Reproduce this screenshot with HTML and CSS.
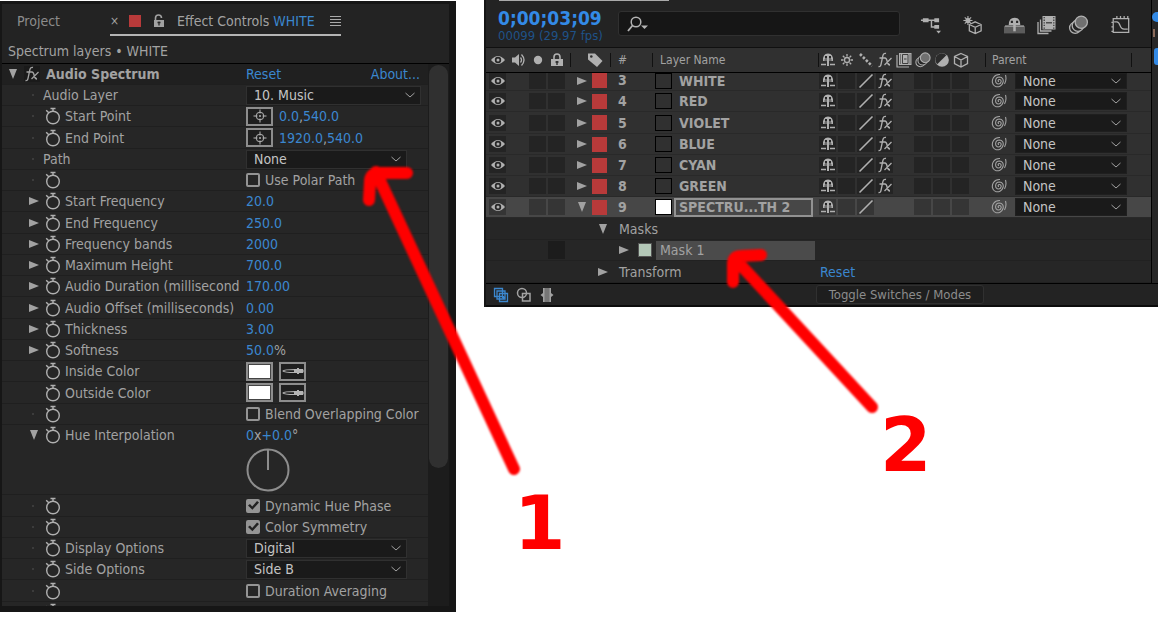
FILE: index.html
```html
<!DOCTYPE html>
<html lang="en">
<head>
<meta charset="utf-8">
<title>Effect Controls</title>
<link rel="stylesheet" href="styles.css">
</head>
<body>
<svg class="sprite" aria-hidden="true">
  <symbol id="watch" viewBox="0 0 20 20"><g fill="none" stroke="currentColor" stroke-width="1.400"><circle cx="10" cy="11.500" r="6.300"/><path d="M7.500 2.500h5M10 2.500V5M3.200 4.200l2.600 2.600"/></g></symbol>
  <symbol id="right" viewBox="0 0 10 10"><path d="M0 1l10 4-10 4z" fill="currentColor"/></symbol>
  <symbol id="down" viewBox="0 0 10 10"><path d="M1 0l4 10 4-10z" fill="currentColor"/></symbol>
  <symbol id="chev" viewBox="0 0 12 8"><path d="M1.500 2l4.500 4 4.500-4" fill="none" stroke="currentColor" stroke-width="1"/></symbol>
  <symbol id="target" viewBox="0 0 16 16"><g fill="none" stroke="currentColor" stroke-width="1"><circle cx="8" cy="8" r="3.800"/><path d="M8 1.500v4M8 10.500v4M1.500 8h4M10.500 8h4M8 7v2M7 8h2"/></g></symbol>
  <symbol id="dropper" viewBox="0 0 24 14"><path d="M2 7q1-1.500 12-1.500v3Q3 8.500 2 7z" fill="none" stroke="currentColor" stroke-width="1.200"/><path d="M13 5h3V4h2v1h4q1.500 2 0 4h-4v1h-2V9h-3z" fill="currentColor"/></symbol>
  <symbol id="fx" viewBox="0 0 16 16"><g fill="none" stroke="currentColor" stroke-width="1.300"><path d="M9 1.500Q6.500.800 5.800 4L4 12.500Q3.500 15 1.500 14.500M2.500 6h5.500M8 6q1.500 0 2.200 3.500t2.800 3.500M14.500 6L7.500 13"/></g></symbol>
  <symbol id="eye" viewBox="0 0 14 10"><path d="M0 5Q7-3 14 5Q7 13 0 5z" fill="currentColor"/><circle cx="7" cy="5" r="3.200" fill="#262626"/><circle cx="7" cy="5" r="1.500" fill="currentColor"/></symbol>
  <symbol id="speaker" viewBox="0 0 16 14"><path d="M1 4.500h3L8 1v12L4 9.500H1z" fill="currentColor"/><path d="M9.500 4.500q2 2.500 0 5M10.500 1.500q5 5.500 0 11" fill="none" stroke="currentColor" stroke-width="1.300"/></symbol>
  <symbol id="dot" viewBox="0 0 10 10"><circle cx="5" cy="5" r="4.200" fill="currentColor"/></symbol>
  <symbol id="lock" viewBox="0 0 12 14"><path d="M0 6h12v7H0z" fill="currentColor"/><path d="M3 6V4q0-3 3-3t3 3v2" fill="none" stroke="currentColor" stroke-width="1.600"/><path d="M6 8v4M4.500 9h3" stroke="#262626" stroke-width="1.300"/></symbol>
  <symbol id="unlock" viewBox="0 0 12 14"><path d="M1 6h10v7H1z" fill="currentColor"/><path d="M2.500 6V4q0-3 3-3t3 3" fill="none" stroke="currentColor" stroke-width="1.600"/><path d="M6 7.500v4M4.500 8.500h3" stroke="#262626" stroke-width="1.300"/></symbol>
  <symbol id="tag" viewBox="0 0 16 16"><path d="M1 1.500h7l7.500 7.500-5.500 6L1 7.500z" fill="currentColor"/><circle cx="4.300" cy="4.500" r="1.300" fill="#2e2e2e"/></symbol>
  <symbol id="shy" viewBox="0 0 16 16"><path d="M3 9Q2.500 1.500 8 1.500T13 9z" fill="currentColor"/><path d="M5 4h2v2.500H5zM9 4h2v2.500H9zM4.500 7.500h2.500v1H4.500zM9 7.500h2.500v1H9z" fill="#262626"/><path d="M1 12.500h5M10 12.500h5" stroke="currentColor" stroke-width="1.400"/><path d="M8 8v6" stroke="currentColor" stroke-width="2"/></symbol>
  <symbol id="sun" viewBox="0 0 16 16"><g fill="none" stroke="currentColor" stroke-width="1.300"><circle cx="8" cy="8" r="2.500"/><path d="M8 2v2.500M8 11.500V14M2 8h2.500M11.500 8H14M3.800 3.800l1.700 1.700M10.500 10.500l1.700 1.700M12.200 3.800l-1.700 1.700M5.500 10.500l-1.700 1.700"/></g></symbol>
  <symbol id="dots" viewBox="0 0 16 16"><path d="M2 2l12 12" stroke="currentColor" stroke-width="2.600" stroke-dasharray="2.500 1.700"/></symbol>
  <symbol id="slash" viewBox="0 0 16 16"><path d="M1.500 14.500l13-13" stroke="currentColor" stroke-width="1.600"/></symbol>
  <symbol id="film" viewBox="0 0 16 16"><path d="M1 3v12h12" fill="none" stroke="currentColor" stroke-width="1.200"/><path d="M3 1h12.500v12H3z" fill="currentColor"/><path d="M4.500 2.500v9.500M14 2.500v9.500" stroke="#333" stroke-width="1" stroke-dasharray="1 1"/><path d="M6.500 2.500h5.500v9H6.500zM8 7h2.500" fill="none" stroke="#333" stroke-width=".9"/></symbol>
  <symbol id="films" viewBox="0 0 20 20"><path d="M1.500 7v11.500H12M4 4.500V16h11" fill="none" stroke="currentColor" stroke-width="1.300"/><path d="M6 1h13v13.500H6z" fill="currentColor"/><path d="M7.700 2v12M17.300 2v12" stroke="#333" stroke-width="1.200" stroke-dasharray="1.300 1.300"/><path d="M9.500 7.800h6" stroke="#333" stroke-width="1.200"/></symbol>
  <symbol id="blur" viewBox="0 0 18 18"><g stroke="currentColor" stroke-width="1.200"><circle cx="6" cy="11.500" r="5" fill="#262626"/><circle cx="8.500" cy="9.500" r="5.200" fill="#262626"/><circle cx="11.500" cy="6.500" r="5.500" fill="#707070"/></g></symbol>
  <symbol id="adjust" viewBox="0 0 14 14"><circle cx="7" cy="7" r="6" fill="currentColor"/><path d="M10.800 2.800L2.800 10.800A5.400 5.400 0 0 1 10.800 2.800z" fill="#2b2b2b"/></symbol>
  <symbol id="cube" viewBox="0 0 16 16"><path d="M8 1.500l6.500 3v7L8 15l-6.500-3.500v-7zM1.500 4.500L8 8l6.500-3.500M8 8v7" fill="none" stroke="currentColor" stroke-width="1.300"/></symbol>
  <symbol id="spiral" viewBox="0 0 16 16"><path d="M8 8.500C6.500 8.500 7 6.200 8.700 6.500C11 7 10.500 11 7.500 11C3.500 11 3.500 4.200 8.500 4C11.500 4 12.800 7 12 9.500C11 13 7.500 14.500 4.500 13.500C1 12 .500 7.500 2.500 4.500C4 2.300 6.500 1.300 9 1.500M14.500 2C15.300 5 15 8.500 13.500 11" fill="none" stroke="currentColor" stroke-width="1.100"/></symbol>
  <symbol id="flow" viewBox="0 0 22 18"><path d="M1 4h17M12 4v7h6" fill="none" stroke="currentColor" stroke-width="1.500"/><path d="M3 2h6v4H3zM15 2h5v4h-5zM15 9h5v4h-5zM17 15h5l-2.500 3z" fill="currentColor"/></symbol>
  <symbol id="draft" viewBox="0 0 22 22"><path d="M6 1v10M1 6h10M2.500 2.500l7 7M9.500 2.500l-7 7" stroke="currentColor" stroke-width="1.200"/><circle cx="6" cy="6" r="2.800" fill="currentColor"/><path d="M14 7.500l6.500 3v7L14 20.500l-6.500-3v-7zM7.500 10.500l6.500 3 6.500-3M14 13.500v7" fill="#232323" stroke="currentColor" stroke-width="1.400"/></symbol>
  <symbol id="shyall" viewBox="0 0 20 18"><path d="M0 10h20v7H0z" fill="#5c5c5c"/><path d="M4.500 9Q4.500 2 10 2t5.500 7z" fill="currentColor"/><path d="M6.500 5h2v2h-2zM11.500 5h2v2h-2z" fill="#262626"/><path d="M1 10h18" stroke="currentColor" stroke-width="1.200"/><path d="M10 9v6" stroke="currentColor" stroke-width="2.400"/></symbol>
  <symbol id="graph" viewBox="0 0 22 22"><path d="M3 4h17v15H3zM7 1v3M11 1v3M15 1v3M19 1v3M1 8h2M1 13h2M1 18h2M4 7.500h3q2 0 3.500 4t4.500 4h4" fill="none" stroke="currentColor" stroke-width="1.400"/></symbol>
  <symbol id="search" viewBox="0 0 22 16"><circle cx="9" cy="6" r="4.800" fill="none" stroke="currentColor" stroke-width="1.500"/><path d="M5.500 9.500L1 15" stroke="currentColor" stroke-width="1.800"/><path d="M14 9.500h7l-3.500 3.500z" fill="currentColor"/></symbol>
  <symbol id="layers" viewBox="0 0 16 16"><g fill="#262626" stroke="currentColor" stroke-width="1.300"><path d="M1.500 1.500h8v8h-8zM4 4h8v8H4zM6.500 6.500h8v8h-8z"/><path d="M10.500 9v3M9 10.500h3"/></g></symbol>
  <symbol id="shapes" viewBox="0 0 16 16"><circle cx="6" cy="6" r="4.500" fill="none" stroke="currentColor" stroke-width="1.500"/><path d="M6.500 6.500h7.500v7.500H6.500z" fill="none" stroke="currentColor" stroke-width="1.500"/></symbol>
  <symbol id="brackets" viewBox="0 0 14 16"><path d="M4 1h6v14H4z" fill="#777"/><path d="M4.500 1H3v5L.500 8 3 10v5h1.500zM9.500 1H11v5l2.500 2L11 10v5H9.500z" fill="currentColor"/></symbol>
</svg>

<main class="workspace">
<section class="panel effects">
  <header class="tabs">
    <span class="tab">Project</span>
    <div class="tab active"><span class="close">×</span><i class="chip"></i><svg class="i-lock"><use href="#unlock"/></svg><span class="tabname">Effect Controls <b>WHITE</b></span><span class="menu"></span></div>
  </header>
  <p class="crumb">Spectrum layers • WHITE</p>
  <div class="scroller">
    <div class="props">
      <div class="row head"><span class="twirl"><svg class="i10"><use href="#down"/></svg><svg class="i-fx"><use href="#fx"/></svg></span><span class="name">Audio Spectrum</span><div class="value between"><a href="#">Reset</a><a href="#">About...</a></div></div>
      <div class="row"><span class="twirl dot"></span><label class="name" for="s1">Audio Layer</label><div class="value"><span class="pick wide"><select id="s1"><option>10. Music</option></select><svg><use href="#chev"/></svg></span></div></div>
      <div class="row"><span class="twirl dot"></span><span class="name"><svg class="watch"><use href="#watch"/></svg>Start Point</span><div class="value"><button class="box" aria-label="Pick start point"><svg class="i16"><use href="#target"/></svg></button><span class="num">0.0<em>,</em>540.0</span></div></div>
      <div class="row"><span class="twirl dot"></span><span class="name"><svg class="watch"><use href="#watch"/></svg>End Point</span><div class="value"><button class="box" aria-label="Pick end point"><svg class="i16"><use href="#target"/></svg></button><span class="num">1920.0<em>,</em>540.0</span></div></div>
      <div class="row"><span class="twirl dot"></span><label class="name" for="s2">Path</label><div class="value"><span class="pick"><select id="s2"><option>None</option></select><svg><use href="#chev"/></svg></span></div></div>
      <div class="row"><span class="twirl dot"></span><span class="name"><svg class="watch"><use href="#watch"/></svg></span><div class="value"><label class="check"><input type="checkbox">Use Polar Path</label></div></div>
      <div class="row"><span class="twirl"><svg class="i10"><use href="#right"/></svg></span><span class="name"><svg class="watch"><use href="#watch"/></svg>Start Frequency</span><div class="value num">20.0</div></div>
      <div class="row"><span class="twirl"><svg class="i10"><use href="#right"/></svg></span><span class="name"><svg class="watch"><use href="#watch"/></svg>End Frequency</span><div class="value num">250.0</div></div>
      <div class="row"><span class="twirl"><svg class="i10"><use href="#right"/></svg></span><span class="name"><svg class="watch"><use href="#watch"/></svg>Frequency bands</span><div class="value num">2000</div></div>
      <div class="row"><span class="twirl"><svg class="i10"><use href="#right"/></svg></span><span class="name"><svg class="watch"><use href="#watch"/></svg>Maximum Height</span><div class="value num">700.0</div></div>
      <div class="row"><span class="twirl"><svg class="i10"><use href="#right"/></svg></span><span class="name"><svg class="watch"><use href="#watch"/></svg>Audio Duration (millisecond</span><div class="value num">170.00</div></div>
      <div class="row"><span class="twirl"><svg class="i10"><use href="#right"/></svg></span><span class="name"><svg class="watch"><use href="#watch"/></svg>Audio Offset (milliseconds)</span><div class="value num">0.00</div></div>
      <div class="row"><span class="twirl"><svg class="i10"><use href="#right"/></svg></span><span class="name"><svg class="watch"><use href="#watch"/></svg>Thickness</span><div class="value num">3.00</div></div>
      <div class="row"><span class="twirl"><svg class="i10"><use href="#right"/></svg></span><span class="name"><svg class="watch"><use href="#watch"/></svg>Softness</span><div class="value num">50.0<em>%</em></div></div>
      <div class="row"><span class="twirl"></span><span class="name"><svg class="watch"><use href="#watch"/></svg>Inside Color</span><div class="value"><button class="box white" aria-label="Inside color"></button><button class="box" aria-label="Sample inside color"><svg class="i-drop"><use href="#dropper"/></svg></button></div></div>
      <div class="row"><span class="twirl"></span><span class="name"><svg class="watch"><use href="#watch"/></svg>Outside Color</span><div class="value"><button class="box white" aria-label="Outside color"></button><button class="box" aria-label="Sample outside color"><svg class="i-drop"><use href="#dropper"/></svg></button></div></div>
      <div class="row"><span class="twirl dot"></span><span class="name"><svg class="watch"><use href="#watch"/></svg></span><div class="value"><label class="check"><input type="checkbox">Blend Overlapping Color</label></div></div>
      <div class="row open"><span class="twirl"><svg class="i10"><use href="#down"/></svg></span><span class="name"><svg class="watch"><use href="#watch"/></svg>Hue Interpolation</span><div class="value num">0<em>x</em>+0.0<em>°</em></div></div>
      <div class="row dialrow"><span class="twirl"></span><span class="name"></span><div class="value"><svg class="dial" viewBox="0 0 44 44"><circle cx="22" cy="22" r="20.500"/><path d="M22 2v20"/></svg></div></div>
      <div class="row"><span class="twirl dot"></span><span class="name"><svg class="watch"><use href="#watch"/></svg></span><div class="value"><label class="check"><input type="checkbox" checked>Dynamic Hue Phase</label></div></div>
      <div class="row"><span class="twirl dot"></span><span class="name"><svg class="watch"><use href="#watch"/></svg></span><div class="value"><label class="check"><input type="checkbox" checked>Color Symmetry</label></div></div>
      <div class="row"><span class="twirl dot"></span><label class="name" for="s3"><svg class="watch"><use href="#watch"/></svg>Display Options</label><div class="value"><span class="pick"><select id="s3"><option>Digital</option></select><svg><use href="#chev"/></svg></span></div></div>
      <div class="row"><span class="twirl dot"></span><label class="name" for="s4"><svg class="watch"><use href="#watch"/></svg>Side Options</label><div class="value"><span class="pick"><select id="s4"><option>Side B</option></select><svg><use href="#chev"/></svg></span></div></div>
      <div class="row"><span class="twirl dot"></span><span class="name"><svg class="watch"><use href="#watch"/></svg></span><div class="value"><label class="check"><input type="checkbox">Duration Averaging</label></div></div>
      <div class="row partial"><span class="twirl"></span><span class="name"><svg class="watch"><use href="#watch"/></svg></span></div>
    </div>
    <div class="track"><div class="thumb"></div></div>
  </div>
</section>

<section class="panel timeline">
  <div class="columns">
    <div class="layers">
      <header class="toolbar">
        <div class="time"><strong>0;00;03;09</strong><span>00099 (29.97 fps)</span></div>
        <label class="search"><svg><use href="#search"/></svg><input type="text" aria-label="Search layers"></label>
        <div class="tools">
          <svg><use href="#flow"/></svg><svg class="apart"><use href="#draft"/></svg><svg class="apart"><use href="#shyall"/></svg><svg><use href="#films"/></svg><svg><use href="#blur"/></svg><svg class="apart"><use href="#graph"/></svg>
        </div>
      </header>
      <table>
        <colgroup><col class="c-eye"><col class="c-s"><col class="c-s"><col class="c-s"><col class="c-label"><col class="c-num"><col><col class="c-s"><col class="c-s"><col class="c-s"><col class="c-s"><col class="c-s"><col class="c-s"><col class="c-s"><col class="c-s"><col class="c-parent"></colgroup>
        <thead><tr>
          <th><svg class="i-eye"><use href="#eye"/></svg></th><th><svg class="i16"><use href="#speaker"/></svg></th><th><svg class="i10"><use href="#dot"/></svg></th><th><svg class="i-lock"><use href="#lock"/></svg></th>
          <th class="tagcell"><svg class="i16"><use href="#tag"/></svg></th><th class="text bar">#</th><th class="text bar">Layer Name</th>
          <th class="bar"><svg class="i16"><use href="#shy"/></svg></th><th><svg class="i16"><use href="#sun"/></svg></th><th><svg class="i16"><use href="#dots"/></svg></th><th><svg class="i16"><use href="#fx"/></svg></th><th><svg class="i16"><use href="#film"/></svg></th><th><svg class="i16"><use href="#blur"/></svg></th><th><svg class="i16"><use href="#adjust"/></svg></th><th><svg class="i16"><use href="#cube"/></svg></th>
          <th class="text parent"><span>Parent</span></th>
        </tr></thead>
        <tbody>
          <tr class="cut"><td><i class="cell"><svg class="i-eye"><use href="#eye"/></svg></i></td><td></td><td><i class="cell"></i></td><td><i class="cell"></i></td><td><span class="lab"><svg class="i10"><use href="#right"/></svg><i class="red"></i></span></td><td class="n">3</td><td><span class="lname"><i class="sw"></i>WHITE</span></td><td><i class="cell"><svg class="i16"><use href="#shy"/></svg></i></td><td><i class="cell"></i></td><td><i class="cell"><svg class="i16"><use href="#slash"/></svg></i></td><td><i class="cell"><svg class="i16"><use href="#fx"/></svg></i></td><td></td><td><i class="cell"></i></td><td><i class="cell"></i></td><td><i class="cell"></i></td><td><span class="par"><svg class="i16"><use href="#spiral"/></svg><span class="pick"><select aria-label="Parent of layer 3"><option>None</option></select><svg><use href="#chev"/></svg></span></span></td></tr>
          <tr><td><i class="cell"><svg class="i-eye"><use href="#eye"/></svg></i></td><td></td><td><i class="cell"></i></td><td><i class="cell"></i></td><td><span class="lab"><svg class="i10"><use href="#right"/></svg><i class="red"></i></span></td><td class="n">4</td><td><span class="lname"><i class="sw"></i>RED</span></td><td><i class="cell"><svg class="i16"><use href="#shy"/></svg></i></td><td><i class="cell"></i></td><td><i class="cell"><svg class="i16"><use href="#slash"/></svg></i></td><td><i class="cell"><svg class="i16"><use href="#fx"/></svg></i></td><td></td><td><i class="cell"></i></td><td><i class="cell"></i></td><td><i class="cell"></i></td><td><span class="par"><svg class="i16"><use href="#spiral"/></svg><span class="pick"><select aria-label="Parent of layer 4"><option>None</option></select><svg><use href="#chev"/></svg></span></span></td></tr>
          <tr class="tall"><td><i class="cell"><svg class="i-eye"><use href="#eye"/></svg></i></td><td></td><td><i class="cell"></i></td><td><i class="cell"></i></td><td><span class="lab"><svg class="i10"><use href="#right"/></svg><i class="red"></i></span></td><td class="n">5</td><td><span class="lname"><i class="sw"></i>VIOLET</span></td><td><i class="cell"><svg class="i16"><use href="#shy"/></svg></i></td><td><i class="cell"></i></td><td><i class="cell"><svg class="i16"><use href="#slash"/></svg></i></td><td><i class="cell"><svg class="i16"><use href="#fx"/></svg></i></td><td></td><td><i class="cell"></i></td><td><i class="cell"></i></td><td><i class="cell"></i></td><td><span class="par"><svg class="i16"><use href="#spiral"/></svg><span class="pick"><select aria-label="Parent of layer 5"><option>None</option></select><svg><use href="#chev"/></svg></span></span></td></tr>
          <tr><td><i class="cell"><svg class="i-eye"><use href="#eye"/></svg></i></td><td></td><td><i class="cell"></i></td><td><i class="cell"></i></td><td><span class="lab"><svg class="i10"><use href="#right"/></svg><i class="red"></i></span></td><td class="n">6</td><td><span class="lname"><i class="sw"></i>BLUE</span></td><td><i class="cell"><svg class="i16"><use href="#shy"/></svg></i></td><td><i class="cell"></i></td><td><i class="cell"><svg class="i16"><use href="#slash"/></svg></i></td><td><i class="cell"><svg class="i16"><use href="#fx"/></svg></i></td><td></td><td><i class="cell"></i></td><td><i class="cell"></i></td><td><i class="cell"></i></td><td><span class="par"><svg class="i16"><use href="#spiral"/></svg><span class="pick"><select aria-label="Parent of layer 6"><option>None</option></select><svg><use href="#chev"/></svg></span></span></td></tr>
          <tr><td><i class="cell"><svg class="i-eye"><use href="#eye"/></svg></i></td><td></td><td><i class="cell"></i></td><td><i class="cell"></i></td><td><span class="lab"><svg class="i10"><use href="#right"/></svg><i class="red"></i></span></td><td class="n">7</td><td><span class="lname"><i class="sw"></i>CYAN</span></td><td><i class="cell"><svg class="i16"><use href="#shy"/></svg></i></td><td><i class="cell"></i></td><td><i class="cell"><svg class="i16"><use href="#slash"/></svg></i></td><td><i class="cell"><svg class="i16"><use href="#fx"/></svg></i></td><td></td><td><i class="cell"></i></td><td><i class="cell"></i></td><td><i class="cell"></i></td><td><span class="par"><svg class="i16"><use href="#spiral"/></svg><span class="pick"><select aria-label="Parent of layer 7"><option>None</option></select><svg><use href="#chev"/></svg></span></span></td></tr>
          <tr><td><i class="cell"><svg class="i-eye"><use href="#eye"/></svg></i></td><td></td><td><i class="cell"></i></td><td><i class="cell"></i></td><td><span class="lab"><svg class="i10"><use href="#right"/></svg><i class="red"></i></span></td><td class="n">8</td><td><span class="lname"><i class="sw"></i>GREEN</span></td><td><i class="cell"><svg class="i16"><use href="#shy"/></svg></i></td><td><i class="cell"></i></td><td><i class="cell"><svg class="i16"><use href="#slash"/></svg></i></td><td><i class="cell"><svg class="i16"><use href="#fx"/></svg></i></td><td></td><td><i class="cell"></i></td><td><i class="cell"></i></td><td><i class="cell"></i></td><td><span class="par"><svg class="i16"><use href="#spiral"/></svg><span class="pick"><select aria-label="Parent of layer 8"><option>None</option></select><svg><use href="#chev"/></svg></span></span></td></tr>
          <tr class="selected"><td><i class="cell"><svg class="i-eye"><use href="#eye"/></svg></i></td><td></td><td><i class="cell"></i></td><td><i class="cell"></i></td><td><span class="lab"><svg class="i10"><use href="#down"/></svg><i class="red"></i></span></td><td class="n">9</td><td><span class="lname"><i class="sw full"></i><span class="edit">SPECTRU...TH 2</span></span></td><td><i class="cell"><svg class="i16"><use href="#shy"/></svg></i></td><td><i class="cell"></i></td><td><i class="cell"><svg class="i16"><use href="#slash"/></svg></i></td><td></td><td></td><td><i class="cell"></i></td><td><i class="cell"></i></td><td><i class="cell"></i></td><td><span class="par"><svg class="i16"><use href="#spiral"/></svg><span class="pick"><select aria-label="Parent of layer 9"><option>None</option></select><svg><use href="#chev"/></svg></span></span></td></tr>
          <tr class="sub tall"><td colspan="4"></td><td colspan="3"><span class="group"><svg class="i10"><use href="#down"/></svg>Masks</span></td><td colspan="9"></td></tr>
          <tr class="sub"><td colspan="3"></td><td><i class="cell"></i></td><td colspan="3"><span class="group mask"><svg class="i10"><use href="#right"/></svg><i class="green"></i><span class="maskname">Mask 1</span></span></td><td colspan="9"></td></tr>
          <tr class="sub tall"><td colspan="4"></td><td colspan="3"><span class="group"><svg class="i10"><use href="#right"/></svg>Transform</span></td><td class="reset" colspan="9"><a href="#">Reset</a></td></tr>
        </tbody>
      </table>
    </div>
    <div class="strip"><i class="knob"></i><i class="mark"></i><i class="block"></i></div>
  </div>
  <footer class="bottom"><div class="toggles"><svg class="on"><use href="#layers"/></svg><svg><use href="#shapes"/></svg><svg><use href="#brackets"/></svg></div><button class="toggle">Toggle Switches / Modes</button></footer>
</section>
</main>

<div class="notes">
  <svg viewBox="0 0 1172 625"><path d="M514 469L376 172M407 173H379Q370 173 370 182L369 200"/><path d="M872 407L736 260M761 255L741 256Q733 256 733 264V282"/></svg>
  <span class="one">1</span><span class="two">2</span>
</div>
</body>
</html>
```
FILE: styles.css
```css
* { box-sizing: border-box; }
body {
  margin: 0;
  background: #fff;
  color: #a2a2a2;
  font: 14px/20px "DejaVu Sans Condensed", "Noto Sans", sans-serif;
  position: relative;
}
svg { display: block; flex: none; }
.sprite { position: absolute; width: 0; height: 0; }
a { color: #3b87cf; text-decoration: none; }
button, select, input { font: inherit; color: inherit; margin: 0; }
i, em { font-style: normal; }
.workspace {
  display: grid;
  grid-template-columns: 456fr 674fr;
  gap: 28px;
  align-items: start;
  padding-right: 14px;
}
.i10 { width: 10px; height: 10px; }
.i16 { width: 16px; height: 16px; }
.i-eye { width: 14px; height: 10px; }
.i-lock { width: 12px; height: 14px; }
.i-drop { width: 24px; height: 14px; }
.i-fx { width: 16px; height: 16px; background: #1a1a1a; }

/* Effect controls */
.effects {
  margin-top: 1px;
  background: #232323;
  border: solid #161616;
  border-width: 3px 7px 6px 2px;
  min-width: 0;
}
.tabs { display: flex; height: 32px; line-height: 34px; }
.tab { padding-left: 15px; white-space: nowrap; color: #8c8c8c; }
.tab.active {
  display: flex;
  align-items: center;
  width: 231px;
  margin-left: 50px;
  padding: 3px 0 0;
  gap: 12px;
  color: #a2a2a2;
  border-bottom: 2px solid #b4b4b4;
}
.tab b { font-weight: normal; color: #3b87cf; }
.close { font-size: 12px; width: 7px; }
.chip { width: 12px; height: 12px; background: #b83a3a; }
.menu { width: 11px; height: 10px; margin-left: auto; background: repeating-linear-gradient(#aaa 0 1px, transparent 1px 3px); }
.crumb { margin: 0; padding: 5px 6px 2px; height: 28px; border-bottom: 1px solid #000; }
.scroller { display: flex; }
.props { flex: 1; min-width: 0; background: #262626; }
.row {
  display: grid;
  grid-template-columns: 41px minmax(0, 203fr) minmax(0, 182fr);
  align-items: center;
  height: 21px;
  border-bottom: 1px solid #1f1f1f;
  white-space: nowrap;
}
.row:nth-child(4n) { height: 22px; }
.row.head { background: #202020; }
.row.head .name { font-weight: bold; padding-left: 3px; }
.row.head .twirl { gap: 6px; padding-left: 6px; justify-content: flex-start; }
.row.open { border: 0; height: 20px; }
.row.dialrow { height: 50px; }
.row.partial { height: 4px; overflow: hidden; align-items: start; border: 0; }
.twirl { display: flex; align-items: center; padding-left: 27px; }
.twirl.dot::before { content: ""; width: 2px; height: 2px; margin-left: 3px; background: #3c3c3c; }
.name { display: flex; align-items: center; gap: 2px; overflow: hidden; }
.watch { width: 20px; height: 20px; color: #b0b0b0; }
.value { display: flex; align-items: center; gap: 6px; }
.between { justify-content: space-between; padding-right: 8px; }
.num { color: #3b87cf; gap: 0; }
em { color: #a2a2a2; }
.box {
  display: flex;
  align-items: center;
  justify-content: center;
  width: 27px;
  height: 19px;
  padding: 0;
  background: #1f1f1f;
  border: 2px solid #8d8d8d;
  color: #b4b4b4;
}
.box.white { background: #fff; box-shadow: inset 0 0 0 1px #444; }
.pick { display: grid; flex: 0 1 161px; min-width: 0; }
.pick.wide { flex-basis: 175px; }
.pick select {
  grid-area: 1 / 1;
  width: 100%;
  height: 19px;
  padding: 0 24px 0 7px;
  appearance: none;
  background: #1a1a1a;
  border: 1px solid #303030;
  border-radius: 0;
  color: #c4c4c4;
  line-height: 17px;
}
.pick svg { grid-area: 1 / 1; place-self: center end; width: 12px; height: 8px; margin-right: 5px; pointer-events: none; }
.check { display: flex; align-items: center; gap: 5px; }
.check input { appearance: none; display: grid; place-items: center; width: 14px; height: 14px; border: 2px solid #949494; border-radius: 2px; }
.check input:checked { background: #949494; }
.check input:checked::before { content: ""; width: 11px; height: 10px; background: #222; clip-path: polygon(0 50%, 18% 35%, 38% 60%, 82% 5%, 100% 20%, 40% 92%); }
.dial { width: 44px; height: 44px; fill: none; stroke: #8d8d8d; stroke-width: 2px; }
.track { width: 21px; background: #1c1c1c; padding: 1px 1px 0; }
.thumb { height: 403px; border-radius: 10px; background: #303030; }

/* Timeline */
.timeline { background: #232323; border-left: 2px solid #161616; min-width: 0; }
.columns { display: flex; }
.layers { flex: 1; min-width: 0; }
.toolbar {
  display: flex;
  align-items: center;
  height: 48px;
  padding-left: 12px;
  background: linear-gradient(#aaa, #aaa) 13px 0 / 170px 1px no-repeat;
  border-bottom: 1px solid #101010;
}
.time { width: 120px; display: flex; flex-direction: column; white-space: nowrap; color: #1f5288; font-size: 13px; line-height: 16px; padding-top: 4px; }
.time strong { font-size: 19px; line-height: 20px; color: #338ae6; }
.search { display: flex; align-items: center; flex: 1; height: 25px; padding-left: 8px; background: #161616; border: 1px solid #303030; border-radius: 3px; }
.search svg { width: 22px; height: 16px; color: #b4b4b4; }
.search input { flex: 1; min-width: 0; background: none; border: 0; outline: 0; }
.tools { display: flex; gap: 11px; margin: 0 20px; padding-top: 2px; color: #b0b0b0; }
.tools svg { width: 21px; height: 20px; }
.tools .apart { margin-left: 10px; }
table { width: 100%; table-layout: fixed; border-collapse: separate; border-spacing: 0; }
.c-eye { width: 23px; }
.c-s { width: 19px; }
.c-label { width: 44px; }
.c-num { width: 42px; }
.c-parent { width: 181px; }
th, td { padding: 0; }
th { height: 25px; background: #303030; border-bottom: 1px solid #000; font-weight: normal; }
th svg { margin: auto; color: #b0b0b0; }
th.text { text-align: left; font-size: 12px; padding-left: 8px; }
th.bar { background: #303030 linear-gradient(#111, #111) 0 center / 1px 14px no-repeat; }
th.tagcell { background: #303030 linear-gradient(#111, #111) 4px center / 1px 14px no-repeat; }
th.tagcell svg { margin-left: 21px; }
th.parent { background: #303030 linear-gradient(90deg, #111 1px, transparent 1px 146px, #111 146px 147px, transparent 147px) 15px center / 147px 14px no-repeat; padding-left: 22px; }
tbody tr { height: 21px; background: #303030; }
tbody tr.tall { height: 22px; }
tbody tr.cut { height: 18px; }
td { height: inherit; border-bottom: 1px solid #292929; }
.cut td { vertical-align: top; line-height: 14px; }
.cell { display: flex; align-items: center; justify-content: center; width: 17px; height: 16px; margin: 0 auto; background: #242424; color: #b0b0b0; }
.selected .cell { background: #353535; }
tbody tr.selected { background: #474747; }
.lab { display: flex; align-items: center; padding-left: 11px; }
.red { width: 15px; height: 15px; margin-left: 5px; background: #b83a3a; }
.n { padding-left: 8px; font-weight: bold; }
.lname { display: flex; align-items: center; gap: 7px; padding-left: 3px; font-weight: bold; white-space: nowrap; }
.sw { width: 17px; height: 16px; flex: none; border: 1px solid #000; }
.sw.full { background: #fff; }
.edit { flex: 1; margin: 0 5px 0 -5px; padding-left: 3px; height: 19px; line-height: 15px; border: 2px solid #929292; }
.par { display: flex; align-items: center; gap: 8px; padding-left: 21px; }
.par .pick { flex: 0 0 112px; }
.par .pick select { height: 18px; border-color: #1f1f1f; line-height: 16px; }
.cut .par .pick select { height: 16px; line-height: 14px; }
tbody tr.sub { background: #262626; }
.sub td { border-color: #212121; }
.sub .cell { background: #1c1c1c; height: 18px; }
.reset { padding-left: 2px; }
.group { display: flex; align-items: center; gap: 11px; padding-left: 32px; height: 20px; }
.group.mask { padding-left: 53px; gap: 9px; }
.green { width: 14px; height: 14px; background: #b4c8b8; border: 1px solid #555; }
.maskname { flex: 1; height: 19px; margin-left: -5px; margin-right: 3px; padding-left: 4px; line-height: 19px; background: #4b4b4b; }
.strip { width: 7px; background: #262626; border-left: 1px solid #000; display: flex; flex-direction: column; padding-top: 12px; }
.knob { height: 10px; background: #338ae6; border-radius: 5px 0 0 5px; }
.mark { height: 8px; width: 2px; margin: 7px 0 11px 1px; background: #8a6a5a; }
.block { height: 17px; margin-left: 2px; background: #338ae6; border-radius: 3px 0 0 3px; }
.bottom { display: flex; align-items: center; height: 24px; border-top: 1px solid #000; border-bottom: 2px solid #0c0c0c; }
.toggles { display: flex; align-items: center; gap: 7px; padding-left: 7px; flex: 1; color: #a2a2a2; }
.toggles svg { width: 16px; height: 16px; }
.toggles .on { color: #3b87cf; }
.toggle { width: 168px; height: 19px; margin-right: 174px; padding: 0; background: #1e1e1e; border: 1px solid #303030; border-radius: 3px; font-size: 13px; line-height: 16px; white-space: nowrap; color: #8c8c8c; }

/* Hand-drawn arrows and numbers over the panels */
.notes { position: absolute; top: 0; left: 0; width: 1172px; height: 625px; pointer-events: none; color: #f00; font: bold 74px/74px "DejaVu Sans", sans-serif; }
.notes svg { width: 1172px; height: 625px; fill: none; stroke: #f00; stroke-width: 12px; stroke-linecap: round; filter: blur(1px); }
.one, .two { position: absolute; }
.one { left: 514px; top: 486px; }
.two { left: 880px; top: 408px; }
```
